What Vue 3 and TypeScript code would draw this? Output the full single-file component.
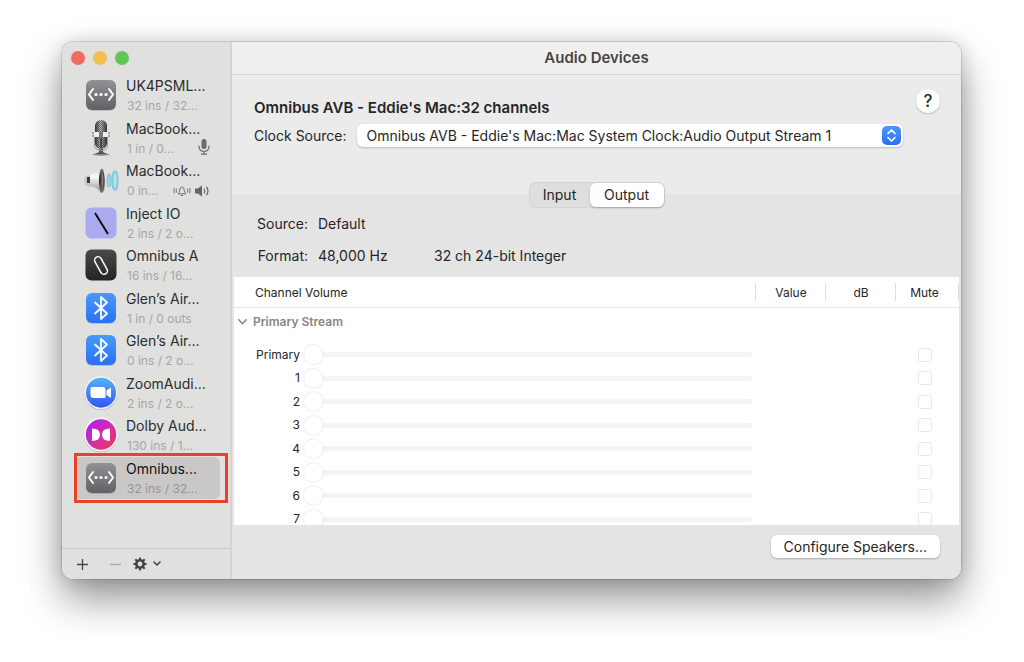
<script setup lang="ts">
import { ref } from 'vue'

type IconKind = 'network' | 'mic' | 'speaker' | 'inject' | 'omnibus' | 'bluetooth' | 'zoom' | 'dolby'

interface Device {
  name: string
  info: string
  icon: IconKind
  badges?: Array<'mic' | 'alert' | 'output'>
}

const devices: Device[] = [
  { name: 'UK4PSML...', info: '32 ins / 32...', icon: 'network' },
  { name: 'MacBook...', info: '1 in / 0...', icon: 'mic', badges: ['mic'] },
  { name: 'MacBook...', info: '0 in...', icon: 'speaker', badges: ['alert', 'output'] },
  { name: 'Inject IO', info: '2 ins / 2 o...', icon: 'inject' },
  { name: 'Omnibus A', info: '16 ins / 16...', icon: 'omnibus' },
  { name: 'Glen’s Air...', info: '1 in / 0 outs', icon: 'bluetooth' },
  { name: 'Glen’s Air...', info: '0 ins / 2 o...', icon: 'bluetooth' },
  { name: 'ZoomAudi...', info: '2 ins / 2 o...', icon: 'zoom' },
  { name: 'Dolby Aud...', info: '130 ins / 1...', icon: 'dolby' },
  { name: 'Omnibus...', info: '32 ins / 32...', icon: 'network' },
]

const selected = ref(9)
const tab = ref<'Input' | 'Output'>('Output')
const tabs = ['Input', 'Output'] as const
const channels = ['Primary', '1', '2', '3', '4', '5', '6', '7']
</script>

<template>
  <main class="page">
    <section class="window">
      <aside class="sidebar">
        <div class="lights">
          <button class="light red" aria-label="Close"></button>
          <button class="light yellow" aria-label="Minimize"></button>
          <button class="light green" aria-label="Zoom"></button>
        </div>
        <ul class="devices">
          <li v-for="(d, i) in devices" :key="i">
            <button class="device" :class="{ selected: selected === i }" @click="selected = i">
              <svg class="icon" viewBox="0 0 36 36" aria-hidden="true">
                <defs>
                  <linearGradient id="gray" x2="0" y2="1"><stop stop-color="#919295" /><stop offset="1" stop-color="#606165" /></linearGradient>
                  <linearGradient id="dark" x2="0" y2="1"><stop stop-color="#4a4a4a" /><stop offset="1" stop-color="#242424" /></linearGradient>
                  <linearGradient id="blue" x2="0" y2="1"><stop stop-color="#479af8" /><stop offset="1" stop-color="#2b70f6" /></linearGradient>
                  <linearGradient id="zoomblue" x2="0" y2="1"><stop stop-color="#55b2f8" /><stop offset="1" stop-color="#3158f3" /></linearGradient>
                  <linearGradient id="dolby" x1="0" y1="0" x2="1" y2="1"><stop offset=".15" stop-color="#b321e8" /><stop offset=".6" stop-color="#d92f9c" /><stop offset="1" stop-color="#f2384e" /></linearGradient>
                  <linearGradient id="metal" x2="1" y2="0"><stop stop-color="#3a3a3a" /><stop offset=".45" stop-color="#c4c4c4" /><stop offset="1" stop-color="#3a3a3a" /></linearGradient>
                  <linearGradient id="cone" x2="0" y2="1"><stop stop-color="#d8d8d8" /><stop offset=".35" stop-color="#fafafa" /><stop offset="1" stop-color="#8e8e8e" /></linearGradient>
                  <linearGradient id="rim" x2="0" y2="1"><stop stop-color="#777" /><stop offset=".5" stop-color="#2a2a2a" /><stop offset="1" stop-color="#777" /></linearGradient>
                  <pattern id="mesh" width="2" height="2" patternUnits="userSpaceOnUse"><path d="M0 0h1v1H0zM1 1h1v1H1z" fill="#222" opacity=".55" /></pattern>
                </defs>
                <g v-if="d.icon === 'network'">
                  <rect x="3" y="4" width="30" height="30" rx="6" fill="#0002" />
                  <rect x="3" y="3" width="30" height="30" rx="6" fill="url(#gray)" />
                  <path d="M10 12l-4 5.500 4 5.500M26 12l4 5.500-4 5.500" fill="none" stroke="#fff" stroke-width="2" stroke-linecap="round" stroke-linejoin="round" />
                  <g fill="#fff"><circle cx="13" cy="17.500" r="1.600" /><circle cx="18" cy="17.500" r="1.600" /><circle cx="23" cy="17.500" r="1.600" /></g>
                </g>
                <g v-else-if="d.icon === 'mic'">
                  <ellipse cx="18" cy="34.500" rx="8.500" ry="1.200" fill="#888" />
                  <path d="M16 28h4v4l4 2H12l4-2z" fill="#555" />
                  <path d="M11.500 17v8q0 5 6.500 5.500t6.500-5.500v-8" fill="none" stroke="#999" stroke-width="1" />
                  <rect x="12" y="0" width="12" height="29" rx="6" fill="url(#metal)" />
                  <rect x="12" y="0" width="12" height="29" rx="6" fill="url(#mesh)" />
                  <path d="M9 13h3M9 16h3M24 13h3M24 16h3" stroke="#888" stroke-width="1.500" />
                  <rect x="11" y="12" width="14" height="5" fill="#eee" />
                  <rect x="16" y="12" width="4" height="6" fill="#777" />
                  <path d="M18 18v10" stroke="#333" stroke-width="1.500" />
                </g>
                <g v-else-if="d.icon === 'speaker'">
                  <path d="M2 15q3-2 7-2v12q-4 0-7-2-1.500-4 0-8z" fill="#c4c4c4" />
                  <rect x="4" y="15" width="3" height="6" fill="#3a3a3a" />
                  <path d="M7 13Q14 11 18 6q3 0 4 6.500t0 13Q21 31 18 31 14 25 7 24z" fill="url(#cone)" />
                  <ellipse cx="18.800" cy="18.500" rx="2.900" ry="12" fill="url(#rim)" />
                  <path d="M19 10q1.600 3 1.600 8.500T19 27q-1.300-8 0-17z" fill="#8a7f78" />
                  <ellipse cx="26" cy="18.500" rx="1.900" ry="6.300" fill="#9fd0de" stroke="#84cadd" stroke-width="1.200" />
                  <ellipse cx="32" cy="18.500" rx="2.600" ry="9.300" fill="#c9dde1" stroke="#7fcadf" stroke-width="2" />
                </g>
                <g v-else-if="d.icon === 'inject'">
                  <rect x="2.500" y="2.500" width="31" height="31" rx="6" fill="#a9aaf0" />
                  <path d="M12 8l13 21" stroke="#000" stroke-width="1.800" />
                </g>
                <g v-else-if="d.icon === 'omnibus'">
                  <rect x="2.500" y="2.500" width="31" height="31" rx="6" fill="url(#dark)" />
                  <rect x="14.500" y="9" width="7" height="19" rx="3.500" fill="none" stroke="#fff" stroke-width="1.500" transform="rotate(-29 18 18.500)" />
                </g>
                <g v-else-if="d.icon === 'bluetooth'">
                  <rect x="3" y="4" width="30" height="30" rx="6" fill="#0002" />
                  <rect x="3" y="3" width="30" height="30" rx="6" fill="url(#blue)" />
                  <path d="M12 12.500l12 11-6 5.500V7l6 5.500-12 11" fill="none" stroke="#fff" stroke-width="1.800" stroke-linejoin="round" stroke-linecap="round" />
                </g>
                <g v-else-if="d.icon === 'zoom'">
                  <circle cx="18" cy="18.500" r="16.600" fill="#0003" />
                  <circle cx="18" cy="17.700" r="16.500" fill="#f4f4f4" />
                  <circle cx="18" cy="17.700" r="15" fill="url(#zoomblue)" />
                  <path d="M9.500 12h10q3 0 3 3v8h-12q-3 0-3-3v-6q0-2 2-2zM23.500 15.500l4.500-3v10.500l-4.500-3z" fill="#fff" />
                </g>
                <g v-else>
                  <circle cx="18" cy="18.300" r="17" fill="#0003" />
                  <circle cx="18" cy="17.500" r="17" fill="#f4f4f4" />
                  <circle cx="18" cy="17.500" r="15.200" fill="url(#dolby)" />
                  <path d="M9 11.500q8 0 8 6.200t-8 6.200zM27 11.500q-8 0-8 6.200t8 6.200z" fill="#fff" />
                </g>
              </svg>
              <span class="text">
                <span class="name">{{ d.name }}</span>
                <span class="line">
                  <span class="info">{{ d.info }}</span>
                  <span v-if="d.badges" class="badges">
                    <template v-for="b in d.badges" :key="b">
                      <svg v-if="b === 'mic'" class="badge-mic" viewBox="0 0 12 16" aria-hidden="true">
                        <rect x="3.500" y="0" width="5" height="10" rx="2.500" fill="#6b6b6a" />
                        <path d="M1 6.500v1.500a5 4.500 0 0 0 10 0V6.500M6 12.500V15M3 15.200h6" fill="none" stroke="#6b6b6a" stroke-width="1.200" />
                      </svg>
                      <svg v-else-if="b === 'alert'" class="badge-alert" viewBox="0 0 18 12" aria-hidden="true">
                        <path d="M5 8.800h8q-1.600-1.400-1.700-3.200Q11.200 2.300 9 1.800 6.800 2.300 6.700 5.600 6.600 7.400 5 8.800z" fill="none" stroke="#70706f" stroke-width="1" stroke-linejoin="round" />
                        <path d="M8.200 10.500h1.600M3.400 4.200q-.8 1.500 0 3M1.300 3.400q-1.200 2.300 0 4.600M14.600 4.200q.8 1.500 0 3M16.700 3.400q1.200 2.300 0 4.600" fill="none" stroke="#70706f" stroke-width="1" stroke-linecap="round" />
                      </svg>
                      <svg v-else class="badge-output" viewBox="0 0 16 12" aria-hidden="true">
                        <path d="M1 3.500h2.800L8 .5v11l-4.200-3H1z" fill="#656564" />
                        <path d="M10.200 4q1.300 2 0 4M12.700 2.200q2.500 3.800 0 7.600" fill="none" stroke="#656564" stroke-width="1.200" stroke-linecap="round" />
                      </svg>
                    </template>
                  </span>
                </span>
              </span>
            </button>
            <span v-if="i === 9" class="callout"></span>
          </li>
        </ul>
        <footer class="tools">
          <button aria-label="Add device">
            <svg width="13" height="13" viewBox="0 0 13 13"><path d="M6.500 1v11M1 6.500h11" stroke="#444" stroke-width="1.300" /></svg>
          </button>
          <button class="remove" aria-label="Remove device">
            <svg width="13" height="13" viewBox="0 0 13 13"><path d="M1 6.500h11" stroke="#aaa" stroke-width="1.300" /></svg>
          </button>
          <button class="gear" aria-label="Device actions">
            <svg width="14" height="14" viewBox="0 0 14 14">
              <circle cx="7" cy="7" r="3.700" fill="none" stroke="#444" stroke-width="2.600" />
              <path d="M7 .4v2.400M7 11.200v2.400M.4 7h2.400M11.200 7h2.400M2.300 2.300L4 4M10 10l1.700 1.700M2.300 11.700L4 10M10 4l1.700-1.700" stroke="#444" stroke-width="2" />
            </svg>
            <svg width="8" height="6" viewBox="0 0 8 6"><path d="M1 1l3 3 3-3" fill="none" stroke="#444" stroke-width="1.600" stroke-linecap="round" stroke-linejoin="round" /></svg>
          </button>
        </footer>
      </aside>

      <div class="content">
        <header class="titlebar">Audio Devices</header>
        <div class="summary">
          <h1>Omnibus AVB - Eddie's Mac:32 channels</h1>
          <button class="help" aria-label="Help">?</button>
          <div class="clock">
            <label for="clock">Clock Source:</label>
            <div class="select">
              <select id="clock">
                <option>Omnibus AVB - Eddie's Mac:Mac System Clock:Audio Output Stream 1</option>
              </select>
              <svg class="stepper" viewBox="0 0 19 19" aria-hidden="true">
                <defs><linearGradient id="stepblue" x2="0" y2="1"><stop stop-color="#4b98f9" /><stop offset="1" stop-color="#2a6ff6" /></linearGradient></defs>
                <rect width="19" height="19" rx="5" fill="url(#stepblue)" />
                <path d="M6 7.500l3.500-3.500L13 7.500M6 11.500l3.500 3.500 3.500-3.500" fill="none" stroke="#fff" stroke-width="1.700" stroke-linecap="round" stroke-linejoin="round" />
              </svg>
            </div>
          </div>
        </div>

        <div class="panel">
          <div class="tabs" role="tablist">
            <button v-for="t in tabs" :key="t" role="tab" :aria-selected="tab === t" :class="{ on: tab === t }" @click="tab = t">{{ t }}</button>
          </div>
          <dl class="facts">
            <dt>Source:</dt>
            <dd>Default</dd>
            <dd></dd>
            <dt>Format:</dt>
            <dd>48,000 Hz</dd>
            <dd>32 ch 24-bit Integer</dd>
          </dl>
          <div class="sheet">
            <table>
              <colgroup><col /><col class="c-value" /><col class="c-db" /><col class="c-mute" /></colgroup>
              <thead>
                <tr><th class="first">Channel Volume</th><th>Value</th><th>dB</th><th class="mute">Mute</th></tr>
              </thead>
              <tbody>
                <tr class="group">
                  <th colspan="4" scope="rowgroup">
                    <button>
                      <svg width="9" height="6" viewBox="0 0 9 6"><path d="M.8.8l3.700 4 3.700-4" fill="none" stroke="#808080" stroke-width="1.500" stroke-linecap="round" stroke-linejoin="round" /></svg>
                      Primary Stream
                    </button>
                  </th>
                </tr>
              </tbody>
              <tbody class="channels">
                <tr v-for="c in channels" :key="c">
                  <td>
                    <div class="volume">
                      <label :for="'vol-' + c">{{ c }}</label>
                      <input :id="'vol-' + c" type="range" min="0" max="100" value="0" disabled />
                    </div>
                  </td>
                  <td></td>
                  <td></td>
                  <td class="mute"><input type="checkbox" :aria-label="'Mute ' + c" disabled /></td>
                </tr>
              </tbody>
            </table>
          </div>
          <footer class="actions"><button>Configure Speakers...</button></footer>
        </div>
      </div>
    </section>
  </main>
</template>

<style>
body {
  margin: 0;
  background: #fff;
}
</style>

<style scoped>
* {
  box-sizing: border-box;
}
button,
select,
input {
  font: inherit;
  color: inherit;
  margin: 0;
  padding: 0;
  border: 0;
  background: none;
}
.page {
  height: 100vh;
  padding: 42px 63px 83px 62px;
  overflow: hidden;
  font-family: Inter, "Liberation Sans", sans-serif;
  font-size: 14px;
  line-height: 20px;
  color: #262626;
}
.window {
  display: flex;
  height: 100%;
  border-radius: 11px;
  overflow: hidden;
  background: #e4e4e4;
  box-shadow: 0 0 0 1px #0000001c, 0 20px 40px #0000006b, 0 0 18px #00000024;
}
.sidebar {
  display: flex;
  flex-direction: column;
  flex: none;
  width: 170px;
  background: #e0e0df;
  border-right: 2px solid #d4d4d3;
}
.lights {
  display: flex;
  gap: 8px;
  padding: 9px;
}
.light {
  width: 14px;
  height: 14px;
  border-radius: 50%;
}
.red { background: #ed6b60; }
.yellow { background: #f5bf50; }
.green { background: #62c656; }
.devices {
  display: grid;
  grid-auto-rows: 1fr;
  height: 425px;
  margin: 0;
  padding: 0 10px 0 13px;
  list-style: none;
}
.devices li {
  position: relative;
}
.device {
  display: flex;
  width: 100%;
  height: 100%;
  padding-left: 8px;
  gap: 7px;
  text-align: left;
  border-radius: 6px;
  color: #2c2c2c;
}
.device.selected {
  background: #c9c8c7;
  color: #111;
}
.icon {
  flex: none;
  width: 36px;
  height: 36px;
  margin-top: 3px;
}
.text {
  flex: 1;
  min-width: 0;
  padding-top: 1px;
}
.name {
  display: block;
  line-height: 21px;
  white-space: nowrap;
}
.line {
  display: flex;
  justify-content: space-between;
  height: 20px;
  padding-left: 1px;
  font-size: 12px;
  color: #a6a6a5;
  white-space: nowrap;
}
.selected .line {
  color: #969594;
}
.badges {
  display: flex;
  align-items: center;
  gap: 3px;
  padding-right: 10px;
}
.badge-mic { width: 12px; height: 16px; margin-bottom: 4px; }
.badge-alert { width: 18px; height: 12px; }
.badge-output { width: 16px; height: 12px; }
.callout {
  position: absolute;
  inset: -4px -8px -4px -1px;
  border: 3px solid #e8432a;
  pointer-events: none;
}
.tools {
  display: flex;
  align-items: center;
  height: 31px;
  margin-top: auto;
  padding-left: 14px;
  border-top: 1px solid #c9c9c8;
}
.tools button {
  display: flex;
  align-items: center;
}
.remove { margin-left: 20px; }
.gear {
  gap: 6px;
  margin-left: 11px;
}
.content {
  display: flex;
  flex-direction: column;
  flex: 1;
  min-width: 0;
}
.titlebar {
  flex: none;
  height: 33px;
  line-height: 32px;
  background: #f0efed;
  border-bottom: 1px solid #d3d3d3;
  text-align: center;
  font-size: 15px;
  font-weight: 600;
  color: #464646;
}
.summary {
  display: grid;
  grid-template-columns: 1fr auto;
  flex: none;
  align-content: start;
  height: 119px;
  padding: 14px 21px 0 22px;
  background: #ebebeb;
}
h1 {
  margin: 9px 0 0;
  font-size: 15px;
  line-height: 20px;
  font-weight: 600;
}
.help {
  width: 24px;
  height: 24px;
  border-radius: 50%;
  background: #fff;
  box-shadow: 0 1px 2px #00000038;
  font-size: 17px;
  font-weight: 500;
}
.clock {
  grid-column: 1 / -1;
  display: flex;
  align-items: center;
  gap: 10px;
  margin-top: 6px;
  padding-right: 37px;
}
.select {
  position: relative;
  flex: 1;
}
select {
  appearance: none;
  display: block;
  width: 100%;
  height: 23px;
  padding: 0 28px 0 10px;
  border-radius: 6px;
  background: #fff;
  box-shadow: 0 1px 2px #00000038;
}
.stepper {
  position: absolute;
  top: 2px;
  right: 2px;
  width: 19px;
  height: 19px;
  pointer-events: none;
}
.panel {
  display: flex;
  flex-direction: column;
  flex: 1;
  min-height: 0;
  background: #e4e4e4;
}
.tabs {
  display: flex;
  align-self: center;
  flex: none;
  height: 24px;
  margin-top: -11px;
  border-radius: 6px;
  background: #dedede;
  box-shadow: 0 0 0 1px #d4d4d4;
}
.tabs button {
  width: 60px;
  border-radius: 6px;
}
.tabs .on {
  width: 74px;
  background: #fff;
  box-shadow: 0 1px 2px #00000040;
}
.facts {
  display: grid;
  grid-template-columns: 52px 106px 1fr;
  column-gap: 10px;
  row-gap: 12px;
  flex: none;
  margin: 7px 0 11px;
  padding-left: 24px;
}
dt {
  text-align: right;
}
dd {
  margin: 0;
}
.sheet {
  flex: 1;
  min-height: 0;
  margin: 0 2px;
  overflow: hidden;
  background: #fff;
}
table {
  width: 100%;
  table-layout: fixed;
  border-collapse: separate;
  border-spacing: 0;
  font-size: 12px;
}
.c-value { width: 70px; }
.c-db { width: 70px; }
.c-mute { width: 63px; }
th,
td {
  padding: 0;
}
thead th {
  height: 31px;
  padding-top: 2px;
  border-bottom: 1px solid #e6e6e6;
  background: linear-gradient(#dedede, #dedede) right center / 1px 18px no-repeat;
  font-weight: 400;
}
thead .first {
  padding-left: 21px;
  text-align: left;
}
.group th {
  height: 35px;
  padding-bottom: 8px;
  text-align: left;
}
.group button {
  display: flex;
  align-items: center;
  gap: 6px;
  padding-left: 4px;
  font-weight: 600;
  color: #868686;
}
.channels tr {
  height: 23px;
}
.channels tr:nth-child(even) {
  height: 24px;
}
.volume {
  display: flex;
  align-items: center;
  gap: 4px;
  padding-right: 4px;
}
.volume label {
  width: 66px;
  text-align: right;
}
.volume input {
  appearance: none;
  flex: 1;
  min-width: 0;
  height: 20px;
}
.volume input::-webkit-slider-runnable-track {
  height: 5px;
  border-radius: 2px;
  background: #f5f5f5;
}
.volume input::-webkit-slider-thumb {
  appearance: none;
  width: 19px;
  height: 19px;
  margin-top: -7px;
  border-radius: 50%;
  background: #fff;
  box-shadow: 0 0 2px #0000002e;
}
th.mute,
td.mute {
  padding-right: 6px;
  text-align: center;
}
.mute input {
  appearance: none;
  display: block;
  width: 14px;
  height: 14px;
  margin: 0 auto;
  border: 1px solid #e8e8e8;
  border-radius: 3px;
}
.actions {
  display: flex;
  justify-content: flex-end;
  flex: none;
  height: 54px;
  padding: 10px 21px 0 0;
}
.actions button {
  height: 23px;
  padding: 0 13px;
  border-radius: 6px;
  background: #fff;
  box-shadow: 0 1px 2px #00000040;
}
</style>
